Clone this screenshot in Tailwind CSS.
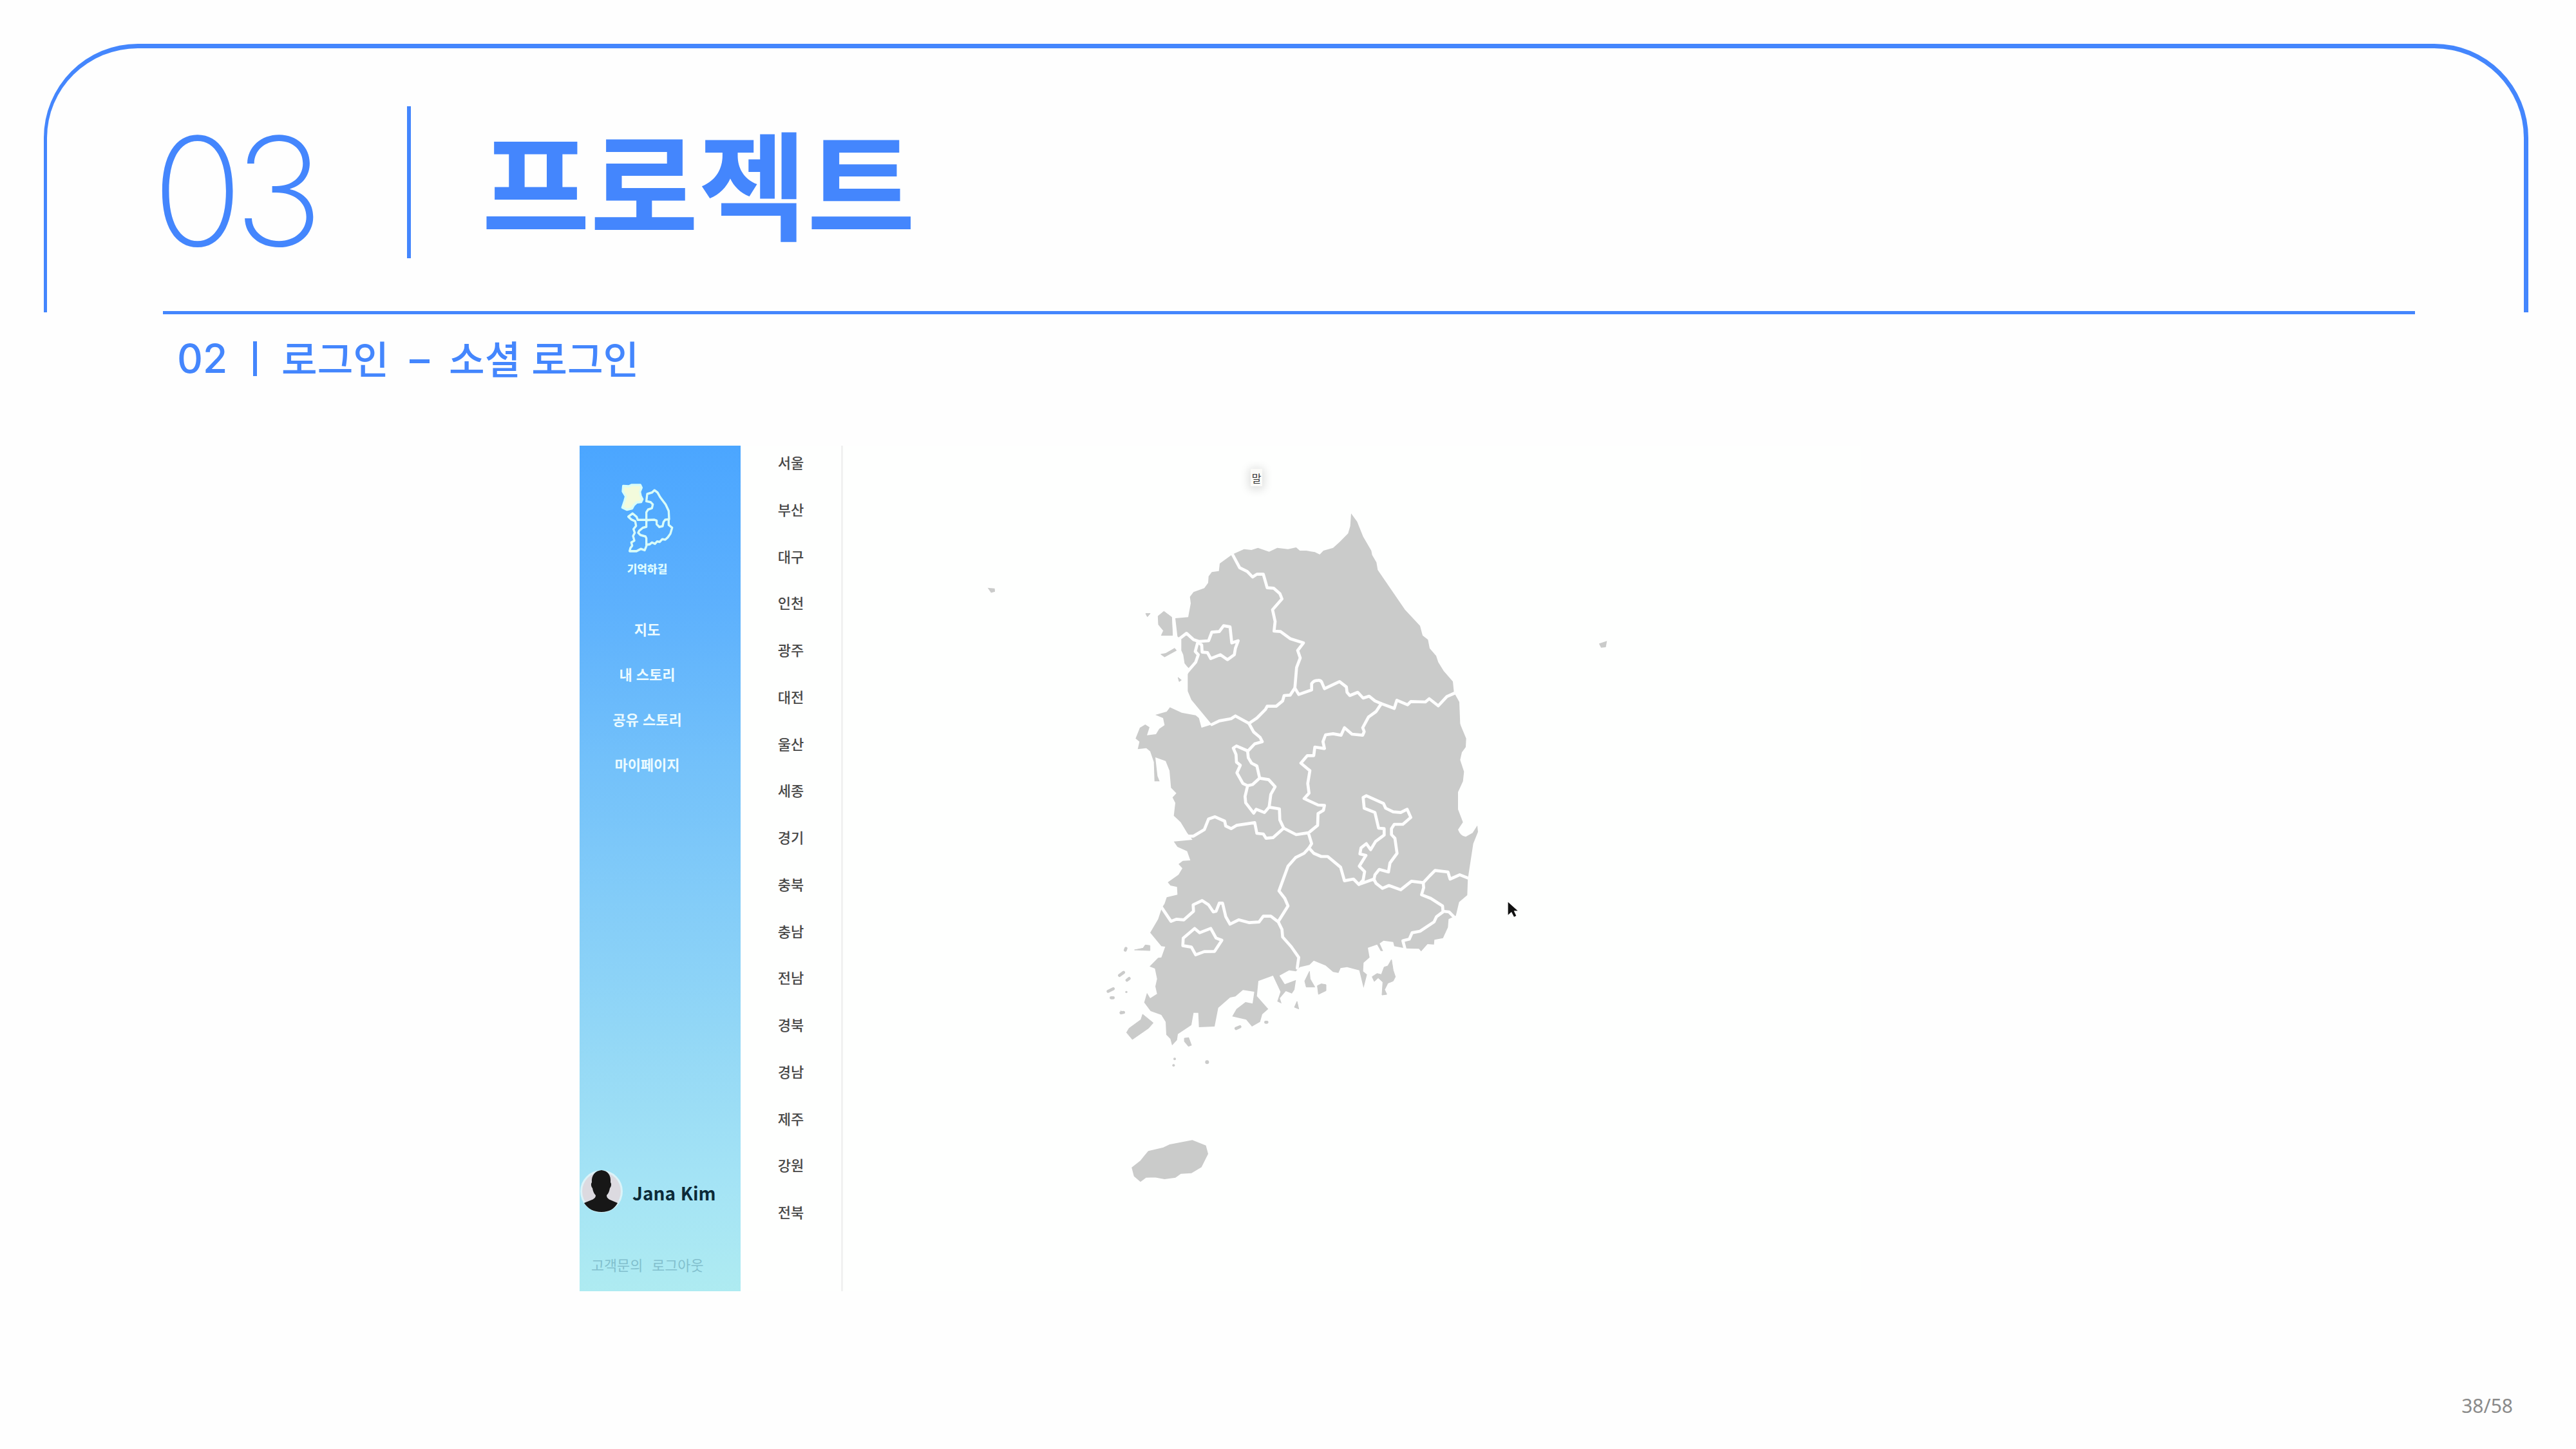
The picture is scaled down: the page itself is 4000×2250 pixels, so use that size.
<!DOCTYPE html>
<html lang="ko">
<head>
<meta charset="utf-8">
<title>프로젝트</title>
<script src="https://cdn.jsdelivr.net/npm/@tailwindcss/browser@4"></script>
</head>
<body class="flex h-[2250px] w-[4000px] flex-col overflow-hidden bg-[#fefefe] font-['Noto_Sans_CJK_KR',sans-serif]">
<header class="ml-[68px] mt-[68px] flex h-[417px] w-[3858px] shrink-0 flex-col rounded-t-[146px] border-l-[5px] border-r-[7px] border-t-[7px] border-[#4486fd] text-[#4486fd]">
  <div class="ml-[163px] mt-[90px] flex h-[236px] items-center">
    <div class="w-[396px] whitespace-nowrap pt-[27px] font-['Inter'] text-[234px] font-extralight leading-none tracking-[-0.06em]">03</div>
    <div class="h-[236px] w-[6px] shrink-0 bg-[#4486fd]"></div>
    <h1 class="ml-[110px] whitespace-nowrap pb-[8px] text-[183px] font-bold leading-none">프로젝트</h1>
  </div>
  <div class="ml-[180px] mt-[82px] h-[5px] w-[3497px] shrink-0 bg-[#4486fd]"></div>
</header>
<h2 class="ml-[275px] mt-[32px] flex h-20 shrink-0 items-center whitespace-nowrap text-[60.5px] font-medium leading-none text-[#4486fd]">
  <span class="w-[118px] font-['Inter'] text-[62px]">02</span><span class="h-[54px] w-[6px] bg-[#4486fd]"></span><span class="ml-[38px] w-[199px] pb-[4px]">로그인</span><span class="mt-[8px] h-[6px] w-[31px] bg-[#4486fd]"></span><span class="ml-[30px] pb-[4px]">소셜 로그인</span>
</h2>
<main class="ml-[900px] mt-[95px] flex h-[1313px] w-[1990px] shrink-0 bg-[#fefffe]">
  <aside class="flex h-full w-[250px] shrink-0 flex-col bg-[linear-gradient(180deg,#4ba6ff_0%,#5cb0fd_18%,#73c1fa_38%,#9bddf5_78%,#a5e4f5_88%,#aeebf1_100%)]">
    <div class="flex h-[249px] w-[210px] flex-col items-center">
      <svg class="mt-[56px] h-[110px] w-[90px] shrink-0" viewBox="241 190 270 308" preserveAspectRatio="none" fill="none" stroke="#d9fdf8" stroke-width="10" stroke-linejoin="round" stroke-linecap="round">
        <path d="M264 208l26 2 14-6 40 0 6 12-8 18 4 18 8 14-6 12-20 2-14 12-8 14-24 6-22-10 10-28 6-20-14-22z" fill="#f3fbdc"/>
        <path d="M408 355l12 4 0 16 12 12 16-4 4-18 8-10 18-2-2-36-14-28-26-32-12-20-14-10-12 10-22 6-4 32 20 4 10 10-4 16-18 6-8 12 0 34z"/>
        <path d="M288 342l20-14 18 14 6 14 40 0 0 30-16 4-18 14-4 8 10 10 24 6 4 8 0 34-8 18-18-6-20 10-32 0 4-14 8-10-4-14 14-8-6-20 8-14-6-16 12-14-4-20-18-8z"/>
        <path d="M372 464l16-2 10-8 14 6 10-10 12 2 12-12 14 2 12-10 12-16 8-26-16-12 0-22"/>
      </svg>
      <div class="mt-[16px] text-[17px] font-black leading-none text-[#defcff]">기억하길</div>
    </div>
    <nav class="flex w-[210px] flex-col items-center text-[22px] font-bold leading-[70px] text-[#ecfbff]">
      <div>지도</div><div>내 스토리</div><div>공유 스토리</div><div>마이페이지</div>
    </nav>
    <div class="mt-auto flex h-[68px] items-center">
      <svg class="h-[68px] w-[68px] shrink-0" viewBox="0 0 68 68"><circle cx="34" cy="34" r="33" fill="#dcf3f8"/><circle cx="34" cy="34" r="30" fill="#dcdae0"/><path d="M34 1C24 2 18 9 19 20c-2 2-1 7 1 9 1 6 3 9 5 11 0 6-6 7-18 12 6 9 15 14 27 14s20-5 25-14c-12-5-17-6-17-12 3-3 4-6 5-11 2-2 3-7 1-9C49 9 44 2 34 1z" fill="#171717"/></svg>
      <div class="ml-[14px] whitespace-nowrap pt-[3px] text-[28px] font-bold leading-none text-[#0c2a38]">Jana Kim</div>
    </div>
    <div class="mb-[25px] ml-[18px] mt-[64px] flex gap-[14px] whitespace-nowrap text-[21.8px] leading-[32px] text-[#82bfcd]"><span>고객문의</span><span>로그아웃</span></div>
  </aside>
  <ul class="flex h-full w-[159px] shrink-0 flex-col items-center border-r-[3px] border-[#f1f1f1] text-[22px] font-medium leading-[72.75px] text-[#474747]">
    <li class="-mt-[11px]">서울</li><li>부산</li><li>대구</li><li>인천</li><li>광주</li><li>대전</li><li>울산</li><li>세종</li><li>경기</li><li>충북</li><li>충남</li><li>전남</li><li>경북</li><li>경남</li><li>제주</li><li>강원</li><li>전북</li>
  </ul>
  <section class="relative h-full w-[1581px] shrink-0">
    <svg class="h-[1313px] w-[1581px]" viewBox="-1173 -264 4743 3939" fill="#cacbca">
      <path d="M640 243L695 218 730 222 760 212 812 230 850 212 900 218 938 210 955 225 985 225 1025 232 1048 243 1065 225 1110 212 1140 185 1180 145 1190 110 1194 52 1222 90 1250 160 1288 225 1292 245 1312 280 1318 315 1445 500 1515 575 1527 620 1552 640 1560 680 1590 715 1600 745 1625 785 1668 835 1673 885 1698 930 1702 1030 1705 1040 1730 1100 1728 1140 1710 1165 1702 1200 1720 1255 1715 1300 1692 1350 1692 1430 1715 1490 1692 1525Q1704 1556 1728 1558L1760 1540 1782 1505 1785 1535 1763 1590 1740 1740 1738 1750 1735 1830 1697 1862 1682 1925 1648 1942 1645 1980 1622 2030 1582 2038 1580 2060 1550 2058 1520 2092 1510 2080 1450 2078 1395 2068 1390 2048 1345 2042 1327 2055 1343 2090 1332 2090 1315 2060 1272 2075 1280 2120 1252 2145 1250 2185 1268 2200 1252 2262 1232 2180 1175 2165 1145 2170 1135 2192 1110 2188 1075 2158 1020 2135 1000 2155 955 2165 937 2185 905 2180 860 2205 885 2245 937 2225 930 2270 918 2288 890 2277 862 2310 870 2335 850 2325 865 2280 830 2205 762 2230 755 2300 808 2360 780 2385 770 2420 732 2442 705 2410 640 2395 660 2360 702 2328 735 2335 743 2280 690 2272 655 2302 630 2307 575 2355 558 2442 485 2445 482 2378 460 2378 450 2435 387 2477 383 2505 360 2530 352 2500 333 2480 330 2420 310 2388 260 2370 230 2330 243 2285 258 2310 290 2290 282 2255 290 2220 280 2172 255 2162 295 2122 310 2120 328 2070 310 2068 258 2005 295 1942 312 1890 325 1870 335 1840 385 1828 383 1792 352 1785 340 1770 390 1735 408 1705 390 1685 410 1670 445 1668 430 1625 385 1605 368 1580 455 1572 430 1540 400 1490 368 1460 375 1400 362 1375 380 1355 355 1330 348 1250 330 1205 282 1188 292 1275 302 1300 278 1300 275 1210 258 1160 240 1145 200 1150 208 1115 190 1100 210 1050 235 1035 255 1048 243 1085 285 1080 300 1055 325 1038 318 1005 282 990 335 975 350 955 405 980 470 992 485 1005 497 1050 545 1035 450 920 433 880 433 800 445 780 430 765 418 750 412 710 403 690 403 640 385 625 375 540 435 535 447 470 443 440 460 418 510 400 528 375 530 345 545 325 578 320 582 285z"/>
      <path d="M295 530L322 508 358 535 362 620 310 620 320 598 297 570zM237 518L258 518 245 533zM308 708L330 704 372 680 380 690 325 720zM388 816L403 828 393 835zM185 2085L225 2077 235 2062 257 2065 257 2088zM223 2385L272 2425 250 2450 175 2502 148 2470 160 2450 215 2410zM942 2325L950 2360 930 2352zM1000 2185L978 2230 985 2258 1025 2258 1003 2220zM1037 2252L1055 2243 1077 2247 1077 2275 1042 2292zM1382 2130L1390 2180 1400 2210 1390 2230 1365 2240 1350 2270 1360 2292 1338 2295 1342 2235 1320 2215 1302 2232 1292 2210 1315 2195 1335 2200 1348 2165 1365 2160z" stroke="#cacbca" stroke-width="3"/>
      <path d="M175 3100L215 3068 250 3025 320 3008 350 2994 455 2974 515 2998 525 3035 495 3095 450 3122 400 3125 375 3143 325 3150 280 3142 238 3143 213 3162 185 3138z" stroke="#cacbca" stroke-width="6" stroke-linejoin="round"/>
      <path d="M115 2204L134 2190M150 2226L160 2218M62 2278L86 2266M122 2378L134 2376M424 2502L438 2520M658 2451L676 2443M142 2086L145 2078M76 2308L86 2308M796 2422L802 2422" stroke="#cacbca" stroke-width="14" stroke-linecap="round"/>
      <path d="M120 2366V2386L137 2380zM416 2495L438 2492 452 2530 436 2536 416 2512z"/>
      <circle cx="372" cy="2593" r="6"/><circle cx="367" cy="2623" r="6"/><circle cx="523" cy="2608" r="9"/><circle cx="147" cy="2281" r="5"/>
      <path d="M-493 402L-469 404-468 414-482 418zM2353 660L2382 650 2378 672 2360 674z" stroke="#cacbca" stroke-width="6"/>
      <g fill="none" stroke="#fefefe" stroke-width="14" stroke-linejoin="round" stroke-linecap="round">
        <path d="M640 240L675 305 710 322 735 348 755 335 785 335 803 398 833 400 862 425 872 450 828 500 840 555 835 600 865 602 910 635 972 655 945 690 957 725 940 770 932 865 950 895 1010 874 1010 845Q1020 830 1035 830 1055 825 1060 845L1070 868 1140 835 1172 860 1175 885 1188 900 1225 885 1250 912 1278 903 1305 925 1335 938 1395 960 1407 922 1457 943 1472 928 1540 930 1558 915 1600 948 1640 905 1678 888"/>
        <path d="M932 865L910 898 882 900 875 925 845 950 803 950 795 965 755 1005 718 1030 655 995 635 1008 580 1018 545 1035"/>
        <path d="M718 1030L740 1070 770 1095 780 1115 745 1125 712 1160 715 1190 730 1215 755 1228 768 1285 810 1292 840 1325 820 1360 812 1420 860 1428 862 1480 880 1518 938 1548 990 1540"/>
        <path d="M712 1158L660 1135 645 1145 658 1175 660 1210 678 1225 662 1260 690 1310 712 1320 735 1315 768 1285M712 1320L700 1370 703 1400 740 1448 752 1430 790 1445 812 1420"/>
        <path d="M430 1555L460 1555 510 1525 530 1475 560 1465 605 1485 610 1508 635 1520 660 1505 745 1492 755 1542 785 1545 798 1565 830 1562 880 1518"/>
        <path d="M1335 938L1310 975 1275 1000 1248 1050 1255 1068 1248 1085 1198 1080 1163 1050 1147 1085 1110 1078 1075 1083 1063 1115 1070 1147 1025 1140 1020 1180 990 1180 960 1215 1002 1250 992 1310 998 1355 975 1380 1040 1410 1070 1412 1065 1435 1040 1450 1038 1505 995 1540 1010 1590 998 1610 1020 1635 1055 1650 1085 1650 1145 1700 1163 1763 1205 1755 1230 1780 1300 1755 1310 1775 1340 1798 1370 1785 1425 1805 1475 1765 1530 1772 1560 1740 1585 1715 1645 1722 1655 1755 1700 1735 1738 1750"/>
        <path d="M1230 1780L1250 1760 1257 1720 1232 1695 1263 1645 1235 1638 1240 1610 1265 1590 1285 1618 1308 1580 1348 1550 1348 1520 1322 1518 1305 1445 1255 1425 1250 1375 1265 1367 1345 1403 1355 1425 1390 1442 1425 1445 1455 1430 1472 1468 1435 1500 1395 1500 1382 1520 1382 1548 1398 1565 1408 1635 1375 1680 1368 1722 1325 1710 1305 1735 1300 1760"/>
        <path d="M998 1610L975 1635 935 1655 900 1695 858 1810 885 1845 900 1880 855 1952"/>
        <path d="M312 1888L355 1952 380 1942 415 1945 460 1905 458 1875 500 1855 530 1875 552 1908 565 1905 580 1867 595 1867 610 1930 630 1965 670 1945 720 1958 765 1955 785 1928 820 1928 855 1955 872 1990 875 2025 915 2070 950 2120 943 2170"/>
        <path d="M465 1985L488 2005 540 1985 565 2030 592 2040 558 2092 510 2093 470 2108 450 2072 410 2065 412 2030z"/>
        <path d="M1530 1772L1532 1795 1522 1828 1565 1845 1620 1880 1622 1905 1650 1908 1672 1930M1622 1908L1592 1930 1580 1955 1515 1998 1478 2005 1465 2035 1435 2042 1445 2080"/>
        <path d="M395 635L427 610 460 640 485 648 530 645 545 605 580 602 600 575 630 580 638 655 668 645 655 680 650 710 618 733 585 710 540 728 525 700 500 698 498 665 480 650 468 695 482 710 470 745 435 785"/>
      </g>
      <path d="M1925 1862V1922L1941 1908 1953 1931 1963 1926 1952 1903H1970z" fill="#111"/>
    </svg>
    <div class="absolute left-[633px] top-[36px] flex h-[27px] w-[18px] items-center justify-center bg-[#fbfbf8] text-[16px] leading-none text-[#333] shadow-[0_2px_14px_3px_rgba(0,0,0,0.13)]">말</div>
  </section>
</main>
<footer class="mr-[98px] mt-auto flex h-[133px] shrink-0 justify-end font-['Noto_Sans'] text-[30px] leading-[132px] text-[#8b8b8b]">38/58</footer>
</body>
</html>
